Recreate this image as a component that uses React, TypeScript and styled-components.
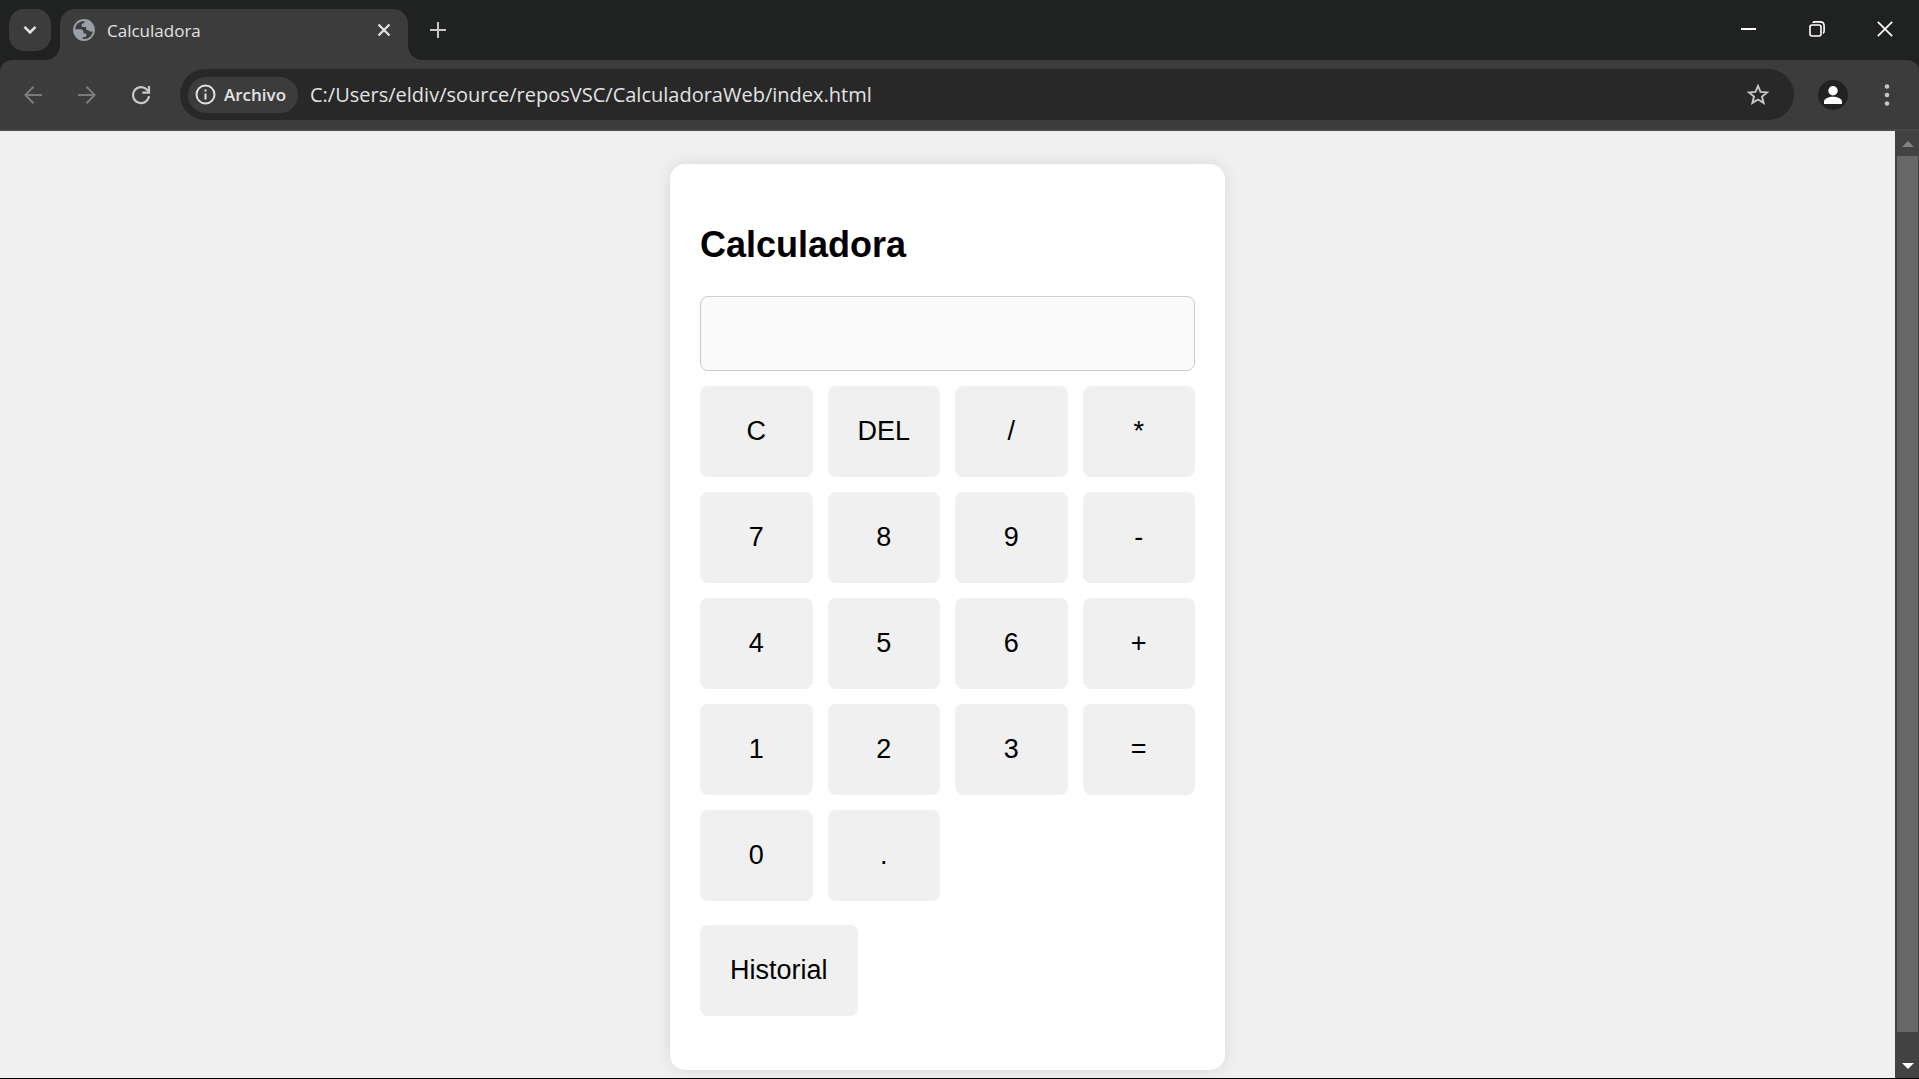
import React, { useState } from 'react';
import styled, { createGlobalStyle } from 'styled-components';

const GlobalStyle = createGlobalStyle`
  *, *::before, *::after { box-sizing: border-box; }
  html, body { margin: 0; height: 100%; }
  #root { height: 100%; }
  body {
    background: #000;
    overflow: hidden;
    font-family: "Liberation Sans", Arial, sans-serif;
  }
  button, input { font: inherit; color: inherit; margin: 0; }
  button { border: 0; padding: 0; background: none; cursor: pointer; }
  svg { display: block; flex: none; }
`;

const chromeFont = '"Open Sans", "Segoe UI", sans-serif';
const dark = '#202221';
const bar = '#3c3c3c';

const Window = styled.div`
  display: flex;
  flex-direction: column;
  height: 100vh;
  border-bottom: 1px solid #000;
`;

const TitleBar = styled.header`
  display: flex;
  align-items: flex-end;
  height: 60px;
  padding-left: 9px;
  background: ${dark};
  font-family: ${chromeFont};
`;

const TabSearch = styled.button`
  display: grid;
  place-items: center;
  width: 42px;
  height: 42px;
  margin: 0 9px 9px 0;
  border-radius: 15px;
  background: ${bar};
`;

const Tab = styled.div`
  position: relative;
  display: flex;
  align-items: center;
  width: 348px;
  height: 51px;
  padding: 0 12px 9px 13px;
  border-radius: 15px 15px 0 0;
  background: ${bar};
  color: #e3e3e3;

  &::before,
  &::after {
    content: '';
    position: absolute;
    bottom: 0;
    width: 15px;
    height: 15px;
  }
  &::before {
    right: 100%;
    background: radial-gradient(circle at 0 0, transparent 15px, ${bar} 15px);
  }
  &::after {
    left: 100%;
    background: radial-gradient(circle at 100% 0, transparent 15px, ${bar} 15px);
  }
`;

const TabTitle = styled.span`
  flex: 1;
  margin-left: 12px;
  padding-top: 2px;
  font-size: 17px;
  line-height: 24px;
`;

const TabClose = styled.button`
  display: grid;
  place-items: center;
  width: 24px;
  height: 24px;
`;

const NewTab = styled.button`
  display: grid;
  place-items: center;
  width: 42px;
  height: 42px;
  margin: 0 0 9px 9px;
`;

const Controls = styled.div`
  display: flex;
  align-self: stretch;
  margin-left: auto;
`;

const Control = styled.button`
  display: grid;
  place-items: center;
  width: 68px;
  height: 58px;
`;

const ToolbarBack = styled.div`
  background: ${dark};
`;

const Toolbar = styled.nav`
  display: flex;
  align-items: center;
  height: 71px;
  padding: 0 11px 0 12px;
  border-bottom: 2px solid #494949;
  border-radius: 12px 12px 0 0;
  background: ${bar};
  font-family: ${chromeFont};
`;

const ToolButton = styled.button<{ $muted?: boolean }>`
  display: grid;
  place-items: center;
  width: 42px;
  height: 42px;
  color: ${(p) => (p.$muted ? '#7a7a7a' : '#c7c7c7')};
  & + & { margin-left: 12px; }
`;

const AddressBar = styled.form`
  display: flex;
  align-items: center;
  flex: 1;
  height: 51px;
  margin: 0 18px;
  padding: 0 15px 0 8px;
  border-radius: 26px;
  background: #282828;
`;

const Scheme = styled.button`
  display: flex;
  align-items: center;
  gap: 8px;
  height: 36px;
  padding: 0 12px 0 7px;
  border-radius: 18px;
  background: ${bar};
  color: #e3e3e3;
  font-size: 17px;
  font-weight: 600;
`;

const Address = styled.input`
  flex: 1;
  min-width: 0;
  height: 36px;
  padding: 0 12px;
  border: 0;
  outline: 0;
  background: transparent;
  color: #e3e3e3;
  font-size: 20px;
`;

const Viewport = styled.div`
  display: flex;
  flex: 1;
  min-height: 0;
  background: #f0f0f0;
`;

const Page = styled.main`
  display: flex;
  justify-content: center;
  align-items: flex-start;
  flex: 1;
  min-width: 0;
  overflow: hidden;
  padding: 33px 0;
`;

const ScrollBar = styled.div`
  display: flex;
  flex-direction: column;
  width: 24px;
  padding: 0 1px 0 2px;
  background: #424242;
`;

const ScrollArrow = styled.button`
  display: grid;
  place-items: center;
  height: 25px;
`;

const ScrollTrack = styled.div`
  flex: 1;
  padding-bottom: 21px;
`;

const ScrollThumb = styled.div`
  height: 100%;
  background: #686868;
`;

const Card = styled.section`
  width: 555px;
  padding: 30px 30px 54px;
  border-radius: 15px;
  background: #fff;
  box-shadow: 0 0 15px rgba(0, 0, 0, 0.1);
`;

const Heading = styled.h2`
  margin: 30px 0;
  color: #000;
  font-size: 36px;
  line-height: 42px;
`;

const Display = styled.input`
  display: block;
  width: 100%;
  height: 75px;
  margin-bottom: 15px;
  padding: 15px;
  border: 1px solid #ccc;
  border-radius: 8px;
  outline: 0;
  background: #fafafa;
  font-size: 36px;
  text-align: right;
`;

const Keys = styled.div`
  display: grid;
  grid-template-columns: repeat(4, 1fr);
  gap: 15px;
  margin-bottom: 24px;
`;

const Key = styled.button`
  height: 91px;
  padding: 0 30px;
  border-radius: 8px;
  background: #f0f0f0;
  color: #000;
  font-size: 27px;
  line-height: 31px;
  white-space: nowrap;
`;

const GridKey = styled(Key)`
  padding: 0;
`;

const labels = [
  'C', 'DEL', '/', '*',
  '7', '8', '9', '-',
  '4', '5', '6', '+',
  '1', '2', '3', '=',
  '0', '.',
];

function Globe() {
  return (
    <svg width="22" height="22" viewBox="0 0 22 22">
      <circle cx="11" cy="11" r="10" fill="#3c3c3c" stroke="#9aa0a6" strokeWidth="1.8" />
      <path
        fill="#9aa0a6"
        d="M12.4 1.2c-1 .9-1.3 1.8-1.2 2.8-1.5.2-2.7 1.1-2.7 2.3 0 1 .7 1.6 1.9 1.6h1.7c.7 0 1 .4 1 1.1 0 1.5.8 2.4 2.3 2.4.8 0 1.2.4 1.2 1.2h4C21.5 7 18 2 12.4 1.200z"
      />
      <path
        fill="#9aa0a6"
        d="M1.1 10.3h6.2c1.9 0 3.1 1.2 3.1 3 0 .9.5 1.3 1.5 1.3h1.4v2.2c0 .8-.5 1.2-1.3 1.2H9.800v3C4.500 20.500.8 16 1.100 10.300z"
      />
    </svg>
  );
}

export default function App() {
  const [value, setValue] = useState('');
  const [url, setUrl] = useState('C:/Users/eldiv/source/reposVSC/CalculadoraWeb/index.html');

  const press = (label: string) => {
    if (label === 'C') setValue('');
    else if (label === 'DEL') setValue((v) => v.slice(0, -1));
    else if (label !== '=') setValue((v) => v + label);
  };

  return (
    <>
      <GlobalStyle />
      <Window>
        <TitleBar>
          <TabSearch aria-label="Buscar pestañas">
            <svg width="14" height="10" viewBox="0 0 14 10" fill="none" stroke="#e3e3e3" strokeWidth="2.6">
              <path d="M1.5 1.8 7 7.3l5.500-5.500" />
            </svg>
          </TabSearch>
          <Tab>
            <Globe />
            <TabTitle>Calculadora</TabTitle>
            <TabClose aria-label="Cerrar pestaña">
              <svg width="14" height="14" viewBox="0 0 14 14" stroke="#e3e3e3" strokeWidth="2.2">
                <path d="M1.5 1.5l11 11M12.5 1.5l-11 11" />
              </svg>
            </TabClose>
          </Tab>
          <NewTab aria-label="Nueva pestaña">
            <svg width="16" height="16" viewBox="0 0 16 16" stroke="#c7c7c7" strokeWidth="2">
              <path d="M8 0v16M0 8h16" />
            </svg>
          </NewTab>
          <Controls>
            <Control aria-label="Minimizar">
              <svg width="16" height="16" viewBox="0 0 16 16" fill="#fff">
                <rect x="0" y="7" width="15" height="2" />
              </svg>
            </Control>
            <Control aria-label="Restaurar">
              <svg width="16" height="16" viewBox="0 0 16 16" fill="none" stroke="#fff" strokeWidth="1.6">
                <rect x="1" y="4" width="11" height="11" rx="2" />
                <path d="M3.8 1.8C4.2 1.1 5 .9 5.8.9h5.400c2.400 0 3.900 1.500 3.900 3.900v5.400c0 .9-.4 1.600-1.100 2" />
              </svg>
            </Control>
            <Control aria-label="Cerrar">
              <svg width="16" height="16" viewBox="0 0 16 16" stroke="#fff" strokeWidth="1.7">
                <path d="M.8.8l14.4 14.4M15.2.8.8 15.2" />
              </svg>
            </Control>
          </Controls>
        </TitleBar>

        <ToolbarBack>
          <Toolbar>
            <ToolButton $muted aria-label="Atrás">
              <svg width="18" height="18" viewBox="0 0 18 18" fill="none" stroke="currentColor" strokeWidth="2">
                <path d="M18 9H1.5M9.5.8 1.3 9l8.2 8.2" />
              </svg>
            </ToolButton>
            <ToolButton $muted aria-label="Adelante">
              <svg width="18" height="18" viewBox="0 0 18 18" fill="none" stroke="currentColor" strokeWidth="2">
                <path d="M0 9h16.5M8.5.8 16.7 9l-8.2 8.2" />
              </svg>
            </ToolButton>
            <ToolButton aria-label="Recargar">
              <svg width="20" height="20" viewBox="0 0 20 20" fill="none" stroke="currentColor" strokeWidth="2.2">
                <path d="M18 11.2A8 8 0 1 1 15.8 4.5L18 6.7" />
                <path d="M18 1v6.600h-6.700" />
              </svg>
            </ToolButton>
            <AddressBar onSubmit={(e) => e.preventDefault()}>
              <Scheme type="button">
                <svg width="21" height="21" viewBox="0 0 21 21" fill="none" stroke="#e3e3e3" strokeWidth="2">
                  <circle cx="10.5" cy="10.5" r="9" />
                  <path d="M10.5 9.5v6M10.5 5.5v2" />
                </svg>
                Archivo
              </Scheme>
              <Address
                aria-label="Barra de direcciones"
                spellCheck={false}
                value={url}
                onChange={(e) => setUrl(e.target.value)}
              />
              <ToolButton type="button" aria-label="Añadir a marcadores">
                <svg width="24" height="24" viewBox="0 0 24 24" fill="none" stroke="currentColor" strokeWidth="1.9">
                  <path d="M12 2.900l2.500 6 6.500.5-5 4.200 1.600 6.300-5.600-3.400-5.600 3.400L8 13.600 3 9.400l6.500-.5z" />
                </svg>
              </ToolButton>
            </AddressBar>
            <ToolButton aria-label="Perfil">
              <svg width="30" height="30" viewBox="0 0 30 30">
                <circle cx="15" cy="15" r="15" fill="#202221" />
                <circle cx="15" cy="10.7" r="4.7" fill="#fff" />
                <path fill="#fff" d="M6 24v-2.5c0-3 5-4.700 9-4.700s9 1.700 9 4.700V24z" />
              </svg>
            </ToolButton>
            <ToolButton aria-label="Menú">
              <svg width="6" height="22" viewBox="0 0 6 22" fill="currentColor">
                <circle cx="3" cy="2.5" r="2.3" />
                <circle cx="3" cy="11" r="2.3" />
                <circle cx="3" cy="19.5" r="2.3" />
              </svg>
            </ToolButton>
          </Toolbar>
        </ToolbarBack>

        <Viewport>
          <Page>
            <Card>
              <Heading>Calculadora</Heading>
              <Display aria-label="Resultado" readOnly value={value} />
              <Keys>
                {labels.map((label) => (
                  <GridKey key={label} type="button" onClick={() => press(label)}>
                    {label}
                  </GridKey>
                ))}
              </Keys>
              <Key type="button">Historial</Key>
            </Card>
          </Page>
          <ScrollBar>
            <ScrollArrow aria-label="Subir">
              <svg width="12" height="6" viewBox="0 0 12 6" fill="#828282"><path d="M6 0l6 6H0z" /></svg>
            </ScrollArrow>
            <ScrollTrack><ScrollThumb /></ScrollTrack>
            <ScrollArrow aria-label="Bajar">
              <svg width="12" height="6" viewBox="0 0 12 6" fill="#fff"><path d="M6 6l6-6H0z" /></svg>
            </ScrollArrow>
          </ScrollBar>
        </Viewport>
      </Window>
    </>
  );
}
